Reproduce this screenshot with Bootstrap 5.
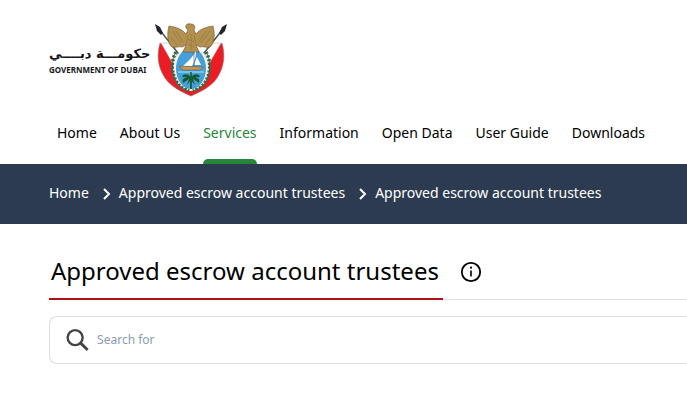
<!DOCTYPE html>
<html lang="en">
<head>
<meta charset="utf-8">
<meta name="viewport" content="width=device-width, initial-scale=1">
<title>Approved escrow account trustees</title>
<link href="https://cdn.jsdelivr.net/npm/bootstrap@5.3.0/dist/css/bootstrap.min.css" rel="stylesheet">
<style>
body{font-family:"Noto Sans","Open Sans",sans-serif;font-size:14px;color:#000;overflow-x:hidden}
.gutter{padding-left:49px}
.brand{height:96px;padding-top:23px;color:#17171b}
.brand-name{width:102px;padding-top:23px;white-space:nowrap}
.brand-ar{font:bold 13px/16px "DejaVu Sans",sans-serif;text-align:left}
.brand-en{font:bold 8px/16px "Noto Sans",sans-serif}
.emblem{width:74px;height:74px;margin-left:3px}
.main-nav{padding-left:57px;height:68px;gap:23px}
.main-nav .nav-link{padding:26px 0 0;line-height:22px;color:#000;height:68px;white-space:nowrap;display:flex;flex-direction:column}
.main-nav .active{color:#28863a}
.main-nav .active::after{content:"";height:5px;margin-top:auto;background:#28863a;border-radius:5px 5px 0 0}
.crumbs{background:#2c3b50;min-height:60px;padding-bottom:3px}
.crumbs a,.crumbs span{color:#fff;text-decoration:none;white-space:nowrap}
.crumbs svg{width:8px;height:12px;margin:3px 8px 0 14px}
.title-row{padding-top:27px}
.title-line{border-bottom:1px solid #dedede}
.page-title{font-size:24px;line-height:40px;font-weight:400;padding:0 4px 7px 2px;border-bottom:2px solid #b01116;margin-bottom:-1px;white-space:nowrap}
.info-btn{width:22px;height:22px;margin:10px 0 0 17px}
.search-box{margin-top:16px;height:48px;border:1px solid #dedede;border-right:0;border-radius:8px 0 0 8px;padding-left:16px}
.search-box input{font-size:12px;padding:0 0 0 8px;line-height:20px}
.search-box input::placeholder{color:#8b9cb5;opacity:1}
</style>
</head>
<body>
<header>
<a href="#" class="gutter brand d-flex text-decoration-none">
<div class="brand-name"><div class="brand-ar" lang="ar" dir="rtl">حكومـــة دبــــي</div><div class="brand-en">GOVERNMENT OF DUBAI</div></div>
<svg class="emblem" viewBox="0 0 74 74" role="img" aria-label="Emblem of Dubai">
<path d="M6 20L24 32L50 32L68 20C71 31 71 43 63 55C57 64 46 69 37 73C28 69 17 64 11 55C3 43 3 31 6 20Z" fill="#ed1c24" stroke="#8b7374" stroke-width=".6"/>
<path d="M7 20L14 20L24 30L19 41ZM67 20L60 20L50 30L55 41Z" fill="#fff" stroke="#a6a6a6" stroke-width=".5"/>
<path d="M5 6L28 35M69 6L46 35" stroke="#4b5055" stroke-width="1.400"/>
<path d="M1 1L6 4L9 10L7 12L3 8ZM73 1L68 4L65 10L67 12L71 8Z" fill="#22252a"/>
<ellipse cx="37" cy="46" rx="18" ry="22" fill="#f5f4ef"/>
<path d="M22 29C16 39 17 55 27 64L35 68M52 29C58 39 57 55 47 64L39 68" fill="none" stroke="#3d6f4c" stroke-width="3.500" stroke-dasharray="2.200 1.600"/>
<path d="M22 29C16 39 17 55 27 64L35 68M52 29C58 39 57 55 47 64L39 68" fill="none" stroke="#2b5f3c" stroke-width=".8"/>
<ellipse cx="37" cy="45.500" rx="15" ry="20.500" fill="#459fd8"/>
<path d="M37 1C33 0 31 2 32 5L34 7L32 11C28 6 22 4 15 3C13 10 13 19 18 24C22 25 25 23 28 24L32 22L29 29H45L42 22L46 24C49 23 52 25 56 24C61 19 61 10 59 3C52 4 46 6 42 11L40 7C42 3 40 1 37 1Z" fill="#b2904f" stroke="#705429" stroke-width=".6"/>
<path d="M18 8L27 20M22 8L29 19M17 14L23 22M56 8L47 20M52 8L45 19M57 14L51 22M34 12L32 22M40 12L42 22M37 11V27M34 16L40 19M34 21L40 24" fill="none" stroke="#8b6d38" stroke-width=".5"/>
<path d="M42 28C39 34 34 38 29 43H38C41 38 42 33 42 28ZM43 34L47 42H40Z" fill="#fff"/>
<path d="M40 30V45" stroke="#675535" stroke-width=".6"/>
<path d="M25 43L49 44L46 47H29Z" fill="#c29a5a" stroke="#685334" stroke-width=".5"/>
<path d="M24 49H50" stroke="#b3e0f2"/>
<path d="M37 54C33 50 29 51 28 54L33 54C29 55 28 57 29 60L35 56L33 62L37 57L41 62L39 56L45 60C46 57 45 55 41 54L46 54C45 51 41 50 37 54Z" fill="#145b31"/>
<path d="M37 49V55" stroke="#145b31" stroke-width="1.500"/>
<path d="M37 56V66" stroke="#145b31" stroke-width="1.800"/>
</svg>
</a>
<nav class="nav flex-nowrap main-nav" aria-label="Main">
<a class="nav-link" href="#">Home</a><a class="nav-link" href="#">About Us</a><a class="nav-link active" aria-current="page" href="#">Services</a><a class="nav-link" href="#">Information</a><a class="nav-link" href="#">Open Data</a><a class="nav-link" href="#">User Guide</a><a class="nav-link" href="#">Downloads</a>
</nav>
</header>
<nav class="crumbs gutter d-flex align-items-center" aria-label="Breadcrumb">
<a href="#">Home</a>
<svg viewBox="0 0 8 12" fill="none" stroke="#fff" stroke-width="2" aria-hidden="true"><path d="M1 1L6 6L1 11"/></svg>
<a href="#">Approved escrow account trustees</a>
<svg viewBox="0 0 8 12" fill="none" stroke="#fff" stroke-width="2" aria-hidden="true"><path d="M1 1L6 6L1 11"/></svg>
<span aria-current="page">Approved escrow account trustees</span>
</nav>
<main class="gutter title-row">
<div class="title-line d-flex align-items-start">
<h1 class="page-title">Approved escrow account trustees</h1>
<button type="button" class="btn p-0 border-0 info-btn d-flex" aria-label="Information"><svg width="22" height="22" viewBox="0 0 22 22"><circle cx="11" cy="11" r="9.200" fill="none" stroke="#000" stroke-width="1.800"/><path d="M11 9.500V15.500" stroke="#000" stroke-width="1.600"/><circle cx="11" cy="6.700" r="1.100"/></svg></button>
</div>
<form class="search-box d-flex align-items-center" role="search">
<svg width="24" height="24" viewBox="0 0 24 24" fill="none" stroke="#444" aria-hidden="true"><circle cx="9.500" cy="9.500" r="7.800" stroke-width="2.500"/><path d="M15 15L22.500 22.500" stroke-width="3"/></svg>
<input class="form-control border-0 shadow-none" type="search" placeholder="Search for" aria-label="Search for">
</form>
</main>
<script src="https://cdn.jsdelivr.net/npm/bootstrap@5.3.0/dist/js/bootstrap.bundle.min.js"></script>
</body>
</html>
